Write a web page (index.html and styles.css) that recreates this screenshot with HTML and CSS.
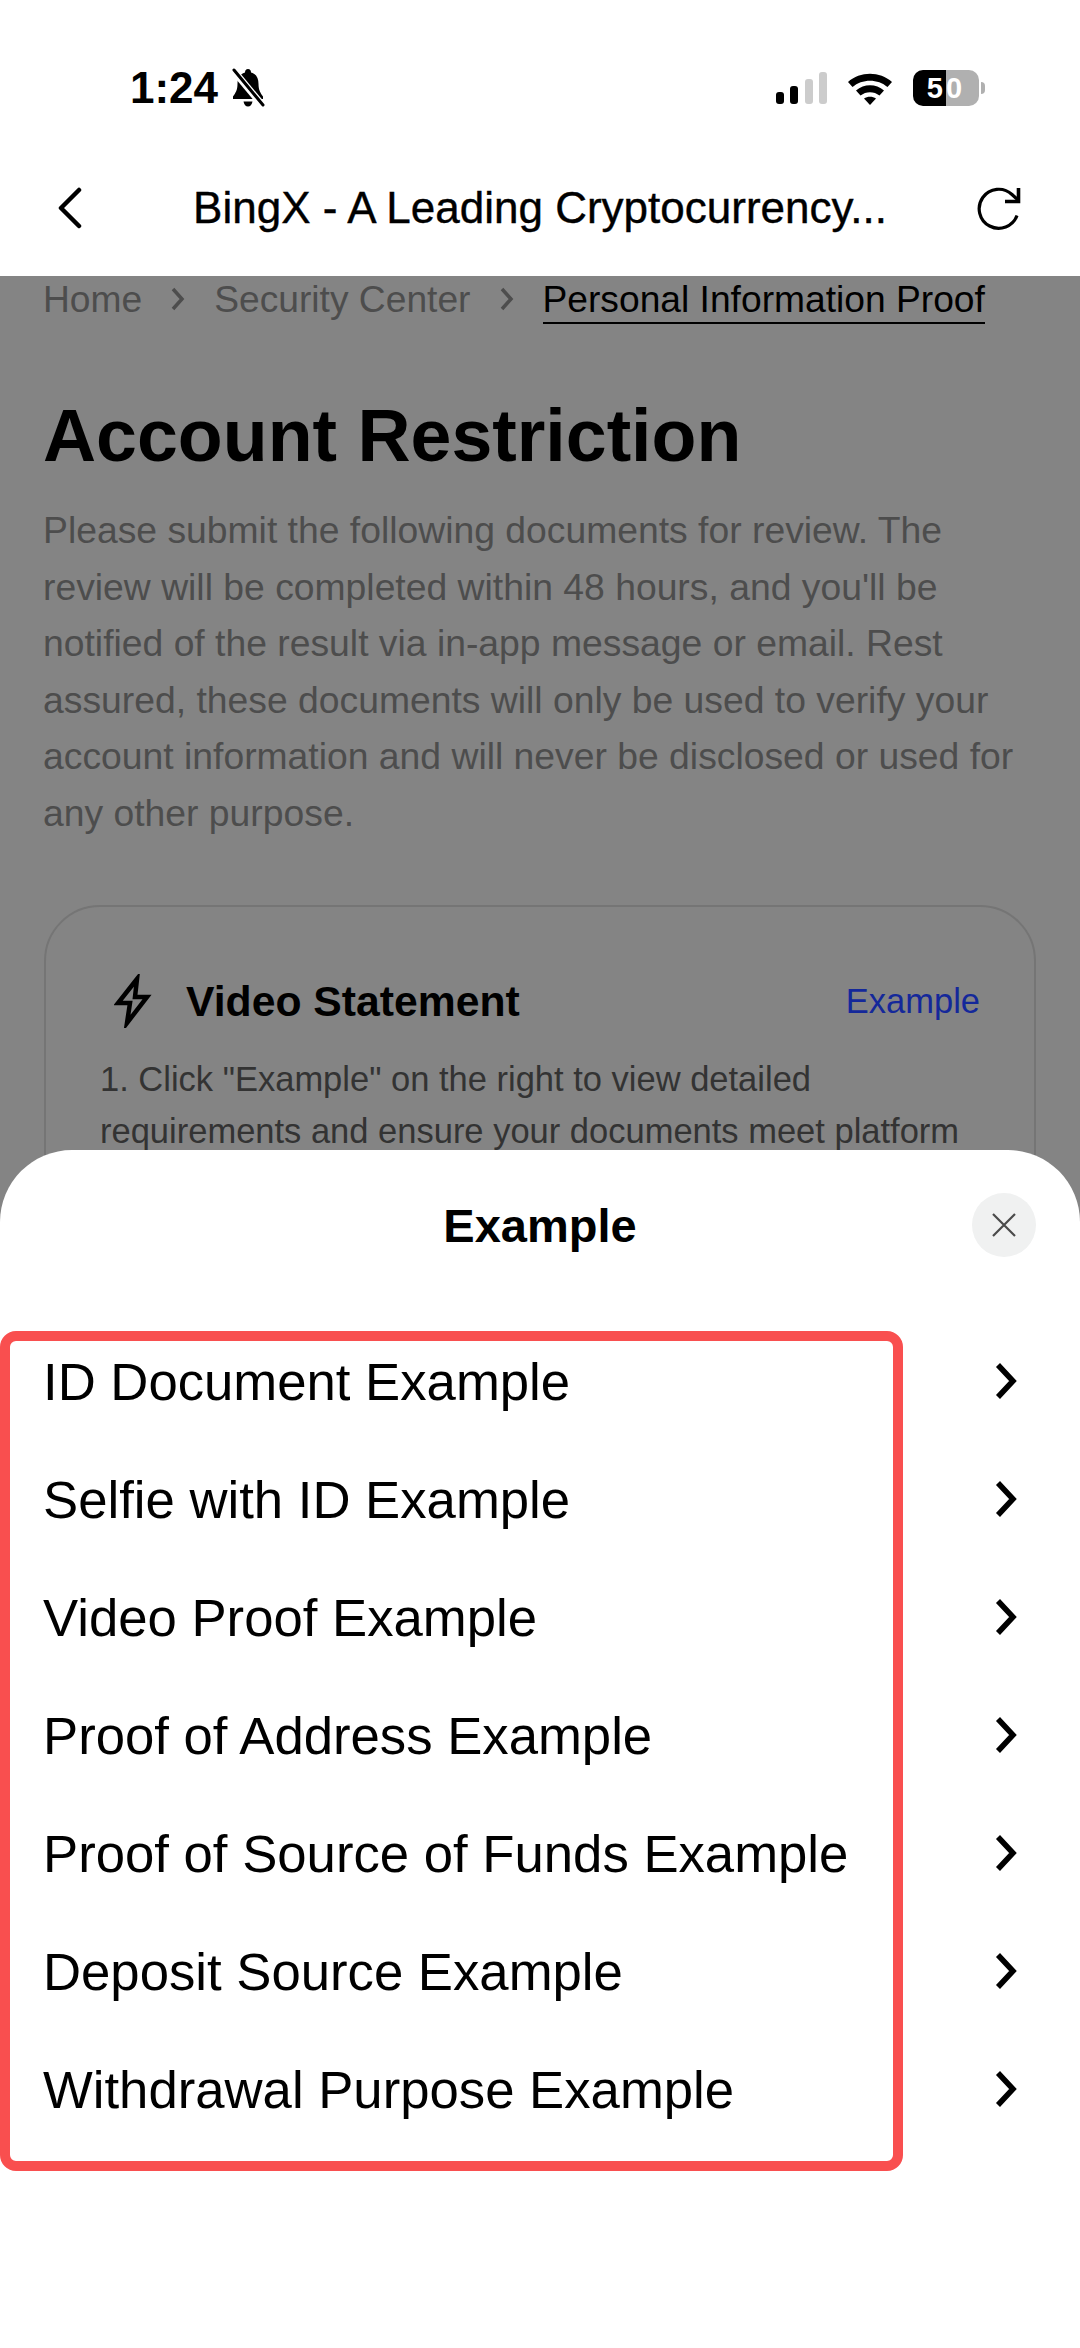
FILE: index.html
```html
<!DOCTYPE html>
<html lang="en">
  <head>
    <meta charset="UTF-8" />
    <meta name="viewport" content="width=device-width, initial-scale=1.0" />
    <title>Example</title>
    <link rel="stylesheet" href="styles.css">
  </head>
  <body>
    <div class="phone">
      <header class="top">
        <div class="status">
          <div class="status-left">
            <span class="time">1:24</span>
            <svg class="bell" viewBox="0 0 36 40" width="36" height="40">
              <path d="M18 1c-2 0-3 1.500-3 3.500C9.500 6 7.500 10.500 7.500 16c0 6-2 9-4.500 12.500V31h30v-2.500C30.500 25 28.500 22 28.500 16c0-5.500-2-10-7.500-11.500C21 2.500 20 1 18 1zM13.500 33.500c.5 3 2.300 5 4.500 5s4-2 4.500-5z" fill="#000"/>
              <path d="M3 2l30 36" stroke="#fff" stroke-width="7"/>
              <path d="M4 2l29 35" stroke="#000" stroke-width="3" stroke-linecap="round"/>
            </svg>
          </div>
          <div class="status-right">
            <div class="signal">
              <i class="bar b1"></i><i class="bar b2"></i><i class="bar b3"></i><i class="bar b4"></i>
            </div>
            <svg class="wifi" viewBox="0 0 46 34" width="46" height="34">
              <path d="M1 11C13 0 33 0 45 11l-4.500 5C31 7.500 15 7.500 5.500 16z" fill="#000"/>
              <path d="M9 19.500c8-7 20-7 28 0l-4.500 5c-5.500-4.500-13.500-4.500-19 0z" fill="#000"/>
              <path d="M17 27.500c3.500-2.500 8.500-2.500 12 0L23 34z" fill="#000"/>
            </svg>
            <div class="battery">
              <div class="battery-body"><span class="battery-num">50</span></div>
              <i class="battery-cap"></i>
            </div>
          </div>
        </div>
        <nav class="nav">
          <svg class="back" viewBox="0 0 28 42" width="28" height="42">
            <path d="M23 3L5 21l18 18" fill="none" stroke="#000" stroke-width="4.500" stroke-linecap="round" stroke-linejoin="round"/>
          </svg>
          <div class="nav-title">BingX - A Leading Cryptocurrency...</div>
          <svg class="reload" viewBox="0 0 48 48" width="48" height="48">
            <path d="M41 31.500A19.500 19.500 0 1 1 36 10.500l5.500 5" fill="none" stroke="#000" stroke-width="3.200"/>
            <path d="M42.500 4v13.500H29" fill="none" stroke="#000" stroke-width="3.600"/>
          </svg>
        </nav>
      </header>

      <main class="page">
        <div class="crumbs">
          <span>Home</span>
          <svg class="crumb-arrow" viewBox="0 0 16 26" width="16" height="26"><path d="M3 3l9 10-9 10" fill="none" stroke="#4d4d4d" stroke-width="3.500"/></svg>
          <span>Security Center</span>
          <svg class="crumb-arrow" viewBox="0 0 16 26" width="16" height="26"><path d="M3 3l9 10-9 10" fill="none" stroke="#4d4d4d" stroke-width="3.500"/></svg>
          <span class="crumb-current">Personal Information Proof</span>
        </div>
        <h1 class="heading">Account Restriction</h1>
        <p class="intro">Please submit the following documents for review. The<br>review will be completed within 48 hours, and you'll be<br>notified of the result via in-app message or email. Rest<br>assured, these documents will only be used to verify your<br>account information and will never be disclosed or used for<br>any other purpose.</p>
        <section class="card">
          <div class="card-head">
            <svg class="bolt" viewBox="0 0 38 54" width="38" height="54">
              <path d="M23 5L4 29h12l-3 20 20-26H21z" fill="none" stroke="#000" stroke-width="4.500"/>
            </svg>
            <h2 class="card-title">Video Statement</h2>
            <a class="card-link">Example</a>
          </div>
          <p class="card-text">1. Click "Example" on the right to view detailed<br>requirements and ensure your documents meet platform</p>
        </section>
      </main>

      <aside class="sheet">
        <div class="sheet-head">
          <h3 class="sheet-title">Example</h3>
          <div class="close">
            <svg viewBox="0 0 26 26" width="26" height="26"><path d="M2 2l22 22M24 2L2 24" stroke="#4a4a4a" stroke-width="2.200" fill="none"/></svg>
          </div>
        </div>
        <div class="list-wrap">
          <div class="mark"></div>
          <ul class="list">
            <li class="item"><span>ID Document Example</span><svg viewBox="0 0 24 38" width="24" height="38"><path d="M4 3l15 16L4 35" fill="none" stroke="#000" stroke-width="5.500"/></svg></li>
            <li class="item"><span>Selfie with ID Example</span><svg viewBox="0 0 24 38" width="24" height="38"><path d="M4 3l15 16L4 35" fill="none" stroke="#000" stroke-width="5.500"/></svg></li>
            <li class="item"><span>Video Proof Example</span><svg viewBox="0 0 24 38" width="24" height="38"><path d="M4 3l15 16L4 35" fill="none" stroke="#000" stroke-width="5.500"/></svg></li>
            <li class="item"><span>Proof of Address Example</span><svg viewBox="0 0 24 38" width="24" height="38"><path d="M4 3l15 16L4 35" fill="none" stroke="#000" stroke-width="5.500"/></svg></li>
            <li class="item"><span>Proof of Source of Funds Example</span><svg viewBox="0 0 24 38" width="24" height="38"><path d="M4 3l15 16L4 35" fill="none" stroke="#000" stroke-width="5.500"/></svg></li>
            <li class="item"><span>Deposit Source Example</span><svg viewBox="0 0 24 38" width="24" height="38"><path d="M4 3l15 16L4 35" fill="none" stroke="#000" stroke-width="5.500"/></svg></li>
            <li class="item"><span>Withdrawal Purpose Example</span><svg viewBox="0 0 24 38" width="24" height="38"><path d="M4 3l15 16L4 35" fill="none" stroke="#000" stroke-width="5.500"/></svg></li>
          </ul>
        </div>
      </aside>
    </div>
  </body>
</html>
```

FILE: styles.css
```css
* {
  box-sizing: border-box;
}
html,
body {
  margin: 0;
  padding: 0;
}
body {
  font-family: "Liberation Sans", Arial, sans-serif;
  color: #000;
  background: #fff;
}
.phone {
  position: relative;
  width: 1080px;
  height: 2348px;
  overflow: hidden;
  background: #848484;
}

/* top bar */
.top {
  height: 276px;
  background: #fff;
}
.status {
  display: flex;
  justify-content: space-between;
  align-items: center;
  height: 176px;
  padding: 0 95px 0 130px;
}
.status-left {
  display: flex;
  align-items: center;
  gap: 12px;
}
.time {
  font-size: 44px;
  font-weight: 700;
  line-height: 52px;
}
.status-right {
  display: flex;
  align-items: center;
  gap: 20px;
}
.signal {
  display: flex;
  align-items: flex-end;
  gap: 6.5px;
  height: 32px;
}
.bar {
  display: block;
  width: 8px;
  border-radius: 3px;
  background: #000;
}
.b1 {
  height: 12px;
}
.b2 {
  height: 18px;
}
.b3 {
  height: 25px;
  background: #ccc;
}
.b4 {
  height: 32px;
  background: #ccc;
}
.battery {
  display: flex;
  align-items: center;
  gap: 2px;
}
.battery-body {
  display: flex;
  align-items: center;
  justify-content: center;
  width: 66px;
  height: 36px;
  border-radius: 10px;
  background: linear-gradient(to right, #000 50%, #b0b0b0 50%);
}
.battery-num {
  color: #fff;
  font-size: 29px;
  font-weight: 700;
  line-height: 36px;
  letter-spacing: 3px;
}
.battery-cap {
  display: block;
  width: 4px;
  height: 12px;
  border-radius: 0 4px 4px 0;
  background: #b0b0b0;
}
.nav {
  display: flex;
  align-items: center;
  justify-content: space-between;
  height: 64px;
  padding: 0 56px;
}
.nav-title {
  margin-left: 20px;
  font-size: 44px;
  line-height: 50px;
  -webkit-text-stroke: 0.4px #000;
}

/* page behind the sheet */
.page {
  padding: 0 43px;
}
.crumbs {
  display: flex;
  align-items: center;
  gap: 28px;
  height: 46px;
  color: #4d4d4d;
  font-size: 37.2px;
}
.crumb-current {
  color: #000;
  border-bottom: 2px solid #000;
  line-height: 46px;
  height: 48px;
  margin-top: 2px;
}
.heading {
  margin: 69px 0 0;
  font-size: 73.5px;
  line-height: 90px;
  font-weight: 700;
}
.intro {
  margin: 21px 0 0;
  color: #4d4d4d;
  font-size: 37.3px;
  line-height: 56.5px;
}
.card {
  margin: 64px 1px 0;
  height: 400px;
  padding: 64px 54px 0;
  border: 2px solid #757575;
  border-radius: 56px;
}
.card-head {
  display: flex;
  align-items: center;
  height: 60px;
}
.bolt {
  margin: 0 34px 0 14px;
}
.card-title {
  margin: 0;
  flex: 1;
  font-size: 42.7px;
  font-weight: 700;
}
.card-link {
  color: #14289a;
  font-size: 34.5px;
}
.card-text {
  margin: 22px 0 0;
  color: #333;
  font-size: 34.5px;
  line-height: 52px;
}

/* bottom sheet */
.sheet {
  position: absolute;
  left: 0;
  right: 0;
  bottom: 0;
  height: 1198px;
  background: #fff;
  border-radius: 72px 72px 0 0;
}
.sheet-head {
  position: relative;
  display: flex;
  align-items: center;
  justify-content: center;
  height: 150px;
}
.sheet-title {
  margin: 0;
  font-size: 47px;
  font-weight: 700;
}
.close {
  position: absolute;
  right: 44px;
  top: 43px;
  display: flex;
  align-items: center;
  justify-content: center;
  width: 64px;
  height: 64px;
  border-radius: 50%;
  background: #f0f1f1;
}
.list-wrap {
  position: relative;
  padding-top: 22px;
}
.mark {
  position: absolute;
  left: 0;
  top: 31px;
  width: 903px;
  height: 840px;
  border: 10px solid #f94f4f;
  border-radius: 16px;
}
.list {
  margin: 0;
  padding: 0 62px 0 43px;
  list-style: none;
}
.item {
  display: flex;
  align-items: center;
  justify-content: space-between;
  height: 118px;
  font-size: 52.7px;
}
```
